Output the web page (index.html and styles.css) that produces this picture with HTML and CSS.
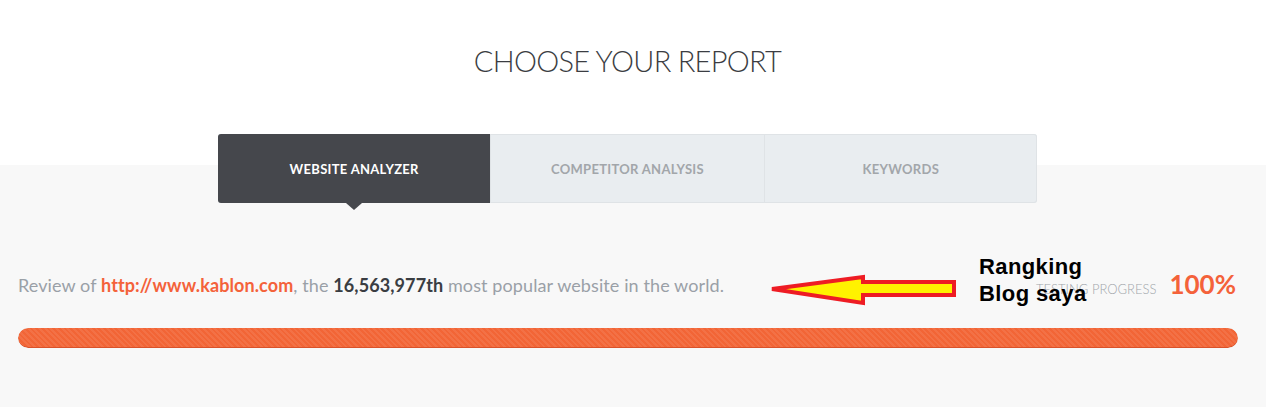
FILE: index.html
```html
<!DOCTYPE html>
<html>
<head>
<meta charset="utf-8">
<link rel="stylesheet" href="styles.css">
</head>
<body>
<header class="top">
  <div class="wrap center">
    <h1 class="title">CHOOSE YOUR REPORT</h1>
  </div>
</header>
<main class="panel">
  <div class="wrap">
    <nav class="tabs">
      <div class="tab active">WEBSITE ANALYZER</div>
      <div class="tab">COMPETITOR ANALYSIS</div>
      <div class="tab">KEYWORDS</div>
    </nav>
    <section class="report">
      <div class="row">
        <p class="review">Review of <a class="link">http://www.kablon.com</a>, the <b class="rank">16,563,977th</b> most popular website in the world.</p>
        <div class="progress-label">
          <span class="testing">TESTING PROGRESS</span>
          <span class="pct">100%</span>
        </div>
        <svg class="arrow" width="190" height="34" viewBox="0 0 190 34">
          <polygon points="2,15 93,3 93,8 184,8 184,21 93,21 93,29" fill="#fff200" stroke="#ee1c24" stroke-width="4" stroke-linejoin="miter"/>
        </svg>
        <div class="note">Rangking<br>Blog saya</div>
      </div>
      <div class="bar"><div class="fill" style="width:100%"></div></div>
    </section>
  </div>
</main>
</body>
</html>
```
FILE: styles.css
```css
html, body { margin: 0; padding: 0; }
body {
  background: #f8f8f8;
  font-family: Lato, "Open Sans", sans-serif;
  width: 1266px;
  height: 407px;
  overflow: hidden;
}
.wrap { width: 1255px; }
.center { display: flex; justify-content: center; }
.top {
  background: #ffffff;
  height: 165px;
}
.title {
  margin: 43px 0 0;
  font-family: Lato, sans-serif;
  font-weight: 300;
  font-size: 29px;
  letter-spacing: -0.7px;
  color: #3b3d42;
  line-height: 36px;
}
.tabs {
  margin: -31px auto 0;
  width: 819px;
  height: 69px;
  display: flex;
  border-radius: 3px;
  background: #e9edf0;
  box-shadow: inset 0 0 0 1px #dfe3e6;
}
.tab {
  flex: 1;
  display: flex;
  align-items: center;
  justify-content: center;
  font-size: 13px;
  font-weight: 700;
  letter-spacing: 0.3px;
  color: #a2a6aa;
  position: relative;
}
.tab + .tab { border-left: 1px solid #dfe3e6; }
.tab.active {
  background: #45474c;
  color: #ffffff;
  border-radius: 3px 0 0 3px;
}
.tab.active::after {
  content: "";
  position: absolute;
  left: 50%;
  bottom: -7px;
  margin-left: -8px;
  border-left: 8px solid transparent;
  border-right: 8px solid transparent;
  border-top: 7px solid #45474c;
}
.report { padding: 0 17px 0 18px; }
.row {
  position: relative;
  height: 125px;
  display: flex;
  align-items: center;
  justify-content: space-between;
  padding-top: 39px;
  box-sizing: border-box;
}
.review {
  margin: 0;
  font-size: 18px;
  letter-spacing: 0.1px;
  color: #9aa0a7;
  font-weight: 400;
}
.link { color: #f4623a; font-weight: 700; text-decoration: none; }
.rank { color: #3a3d42; font-weight: 700; }
.progress-label { display: flex; align-items: baseline; gap: 13px; margin-right: 2px; margin-top: -2px; }
.testing { font-size: 13px; color: #a2a6ab; font-weight: 300; }
.pct { font-size: 26px; color: #f4623a; font-weight: 700; }
.arrow { position: absolute; left: 752px; top: 71px; }
.note {
  position: absolute;
  left: 961px;
  top: 50px;
  font-family: "Liberation Sans", Arial, sans-serif;
  font-weight: 700;
  font-size: 22px;
  letter-spacing: 0.4px;
  line-height: 27px;
  color: #000;
}
.bar {
  height: 20px;
  border-radius: 10px;
  background: #e5e5e5;
  overflow: hidden;
}
.fill {
  height: 100%;
  border-radius: 10px;
  background-color: #f26536;
  background-image: repeating-linear-gradient(45deg, rgba(255,255,255,0.08) 0 2px, transparent 2px 4px);
  box-shadow: inset 0 -1px 0 #d9522a;
}
```
